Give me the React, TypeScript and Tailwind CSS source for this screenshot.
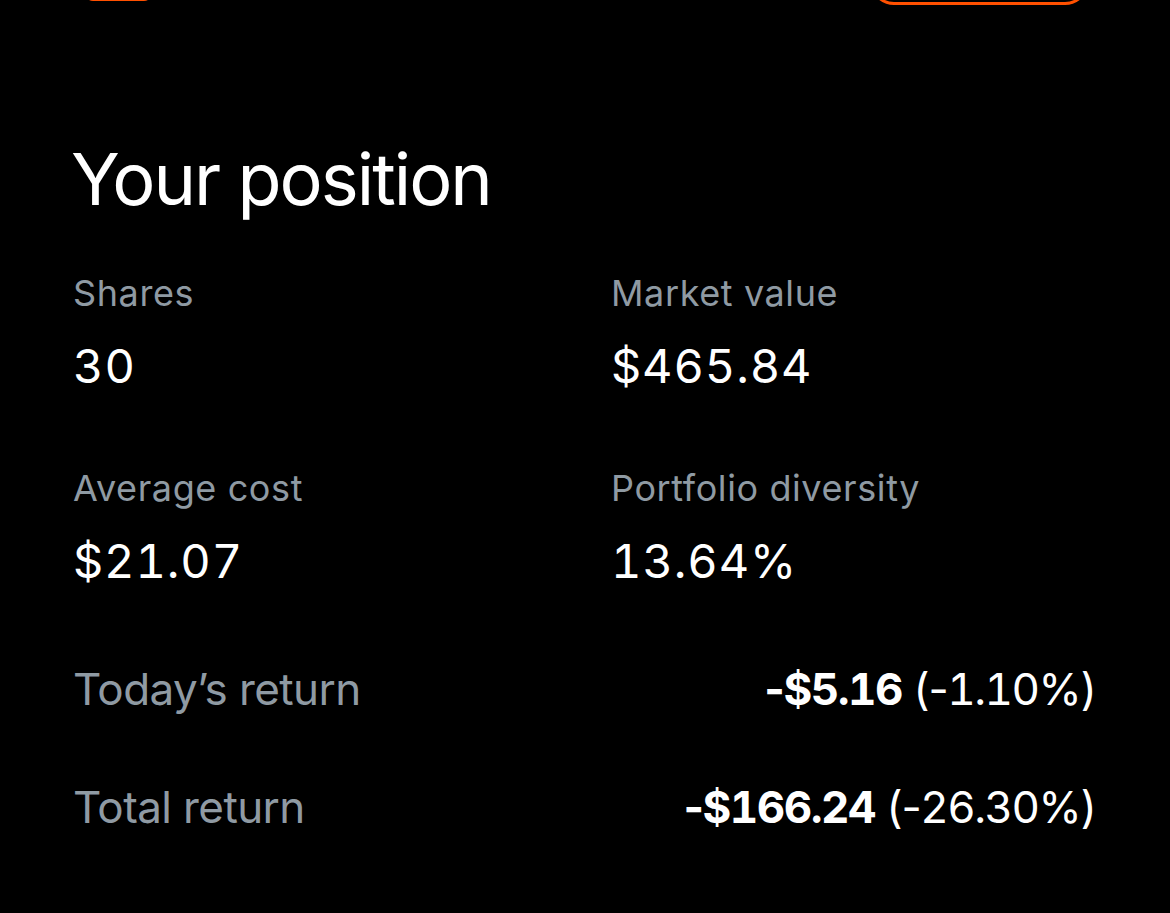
const stats = [
  { label: "Shares", value: "30" },
  { label: "Market value", value: "$465.84" },
  { label: "Average cost", value: "$21.07" },
  { label: "Portfolio diversity", value: "13.64%" },
];

const returns = [
  { label: "Today\u2019s return", amount: "-$5.16", pct: "(-1.10%)" },
  { label: "Total return", amount: "-$166.24", pct: "(-26.30%)" },
];

// tabular digits, but keep the minus sign at its normal width
const Num = ({ text }: { text: string }) => {
  const parts = text.split("-");
  return (
    <>
      {parts.map((p, i) => (
        <span key={i}>
          {i > 0 && "-"}
          <span className="tabular-nums">{p}</span>
        </span>
      ))}
    </>
  );
};

const App = () => {
  return (
    <div
      className="min-h-[913px] w-full overflow-hidden bg-black text-white"
      style={{ fontFamily: "Inter, 'Noto Sans', sans-serif" }}
    >
      {/* header, scrolled mostly out of view */}
      <div className="-mt-[45px] flex h-[50px] items-end justify-between pl-[85px] pr-[81px]">
        <div className="mb-[4px] h-[40px] w-[67px] rounded-lg bg-[#ff5000]"></div>
        <div className="h-[48px] w-[219px] rounded-full border-[3px] border-[#ff5000]"></div>
      </div>

      <div className="pl-[73px] pr-[74px]">
        <h1 className="-ml-[2px] mt-[138px] text-[72px] leading-[72px] font-normal tracking-[-2px]">
          Your position
        </h1>

        <div className="mt-[56px] grid grid-cols-[538px_1fr] gap-y-[72px]">
          {stats.map((s) => (
            <div key={s.label}>
              <p className="text-[36px] leading-[44px] text-[#8f9aa3] tracking-[0.6px]">
                {s.label}
              </p>
              <p className="mt-[23px] text-[47px] leading-[56px] tabular-nums tracking-[0.9px]">
                {s.value}
              </p>
            </div>
          ))}
        </div>

        <div className="mt-[72px] flex flex-col gap-[62px]">
          {returns.map((r) => (
            <div
              key={r.label}
              className="flex items-center justify-between text-[44px] leading-[56px]"
            >
              <span className="text-[#8f9aa3] tracking-[-0.6px]">{r.label}</span>
              <span className="tracking-[-1.5px]">
                <span className="font-bold">
                  <Num text={r.amount} />
                </span>{" "}
                <Num text={r.pct} />
              </span>
            </div>
          ))}
        </div>
      </div>
    </div>
  );
};

export default App;
